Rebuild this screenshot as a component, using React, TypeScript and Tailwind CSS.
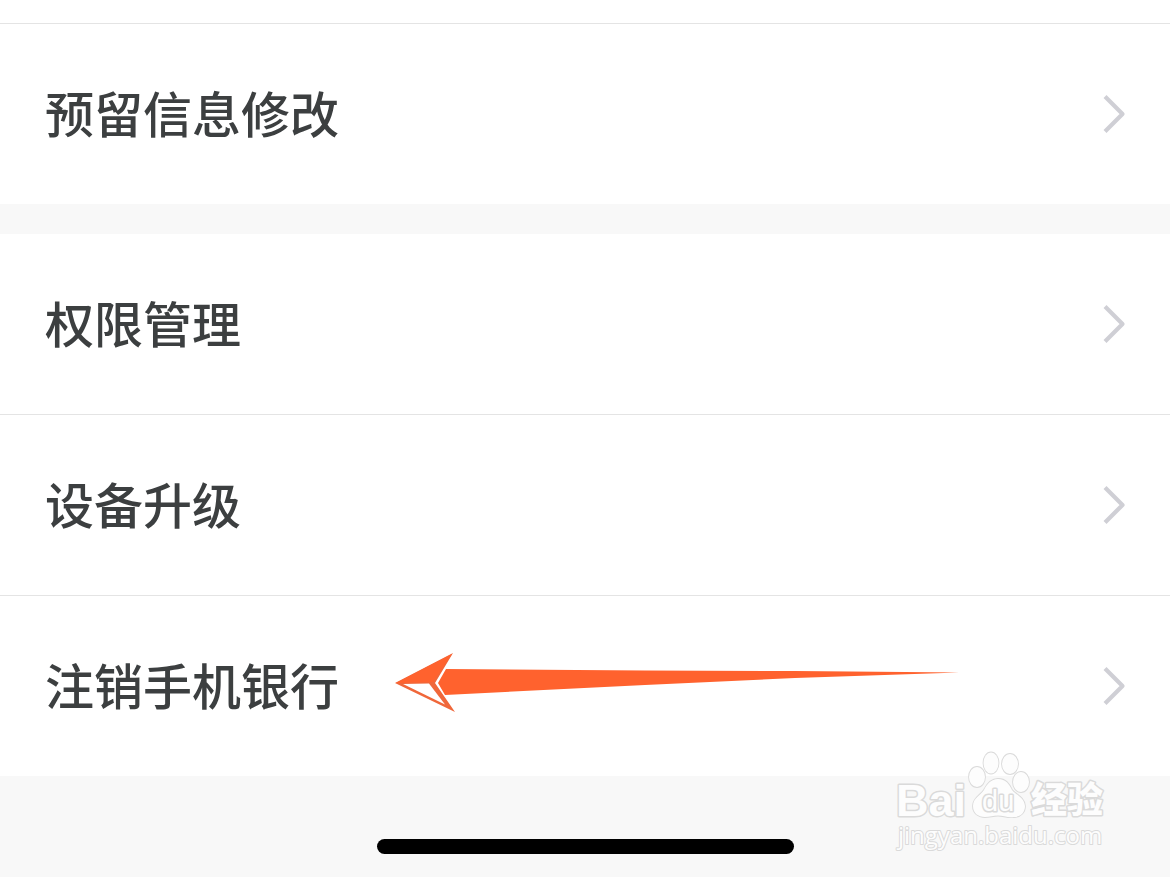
import React from 'react';

interface MenuRowProps {
  label: string;
  children?: React.ReactNode;
}

const ChevronIcon: React.FC = () => (
  <svg className="shrink-0" width="24" height="40" viewBox="0 0 24 40" fill="none" aria-hidden="true">
    <path d="M4.5 4 L20.5 20 L4.5 36" stroke="#cfcfd5" strokeWidth="4.2" strokeLinecap="square" strokeLinejoin="round" />
  </svg>
);

const ArrowMark: React.FC = () => (
  <svg className="mb-1.5 ml-14 shrink-0" width="570" height="64" viewBox="0 0 570 64" aria-hidden="true">
    <path d="M0 32 L58 2 L40 32 L60 61 Z" fill="#f0673a" />
    <path d="M1 32 L57 3 L38 31 Z" fill="#ff622e" />
    <path d="M8 33 L34 32.5 L50 53.5 Z" fill="#fff" />
    <path d="M51 18 L250 19.5 L400 20 L564 21.5 L400 27 L250 34 L50 44 L43 32 Z" fill="#ff622e" />
  </svg>
);

const MenuRow: React.FC<MenuRowProps> = ({ label, children }) => (
  <button type="button" className="flex w-full items-center bg-white py-[54px] pl-[45px] pr-11 text-left">
    <span className="whitespace-nowrap pb-1 text-[49px]/[68px] font-medium text-[#3c3f40]">{label}</span>
    {children}
    <span className="flex-1" />
    <ChevronIcon />
  </button>
);

const Watermark: React.FC = () => (
  <svg
    className="pointer-events-none absolute bottom-3 right-[50px]"
    width="240"
    height="125"
    viewBox="0 0 240 125"
    role="img"
    aria-label="Baidu 经验"
  >
    <g
      fill="#fdfdfd"
      stroke="#dadada"
      strokeWidth="3"
      strokeLinejoin="round"
      paintOrder="stroke"
      fontFamily='"Open Sans", "Noto Sans CJK SC", sans-serif'
    >
      <text x="16" y="76" fontSize="45" fontWeight="700" fontFamily='"Liberation Sans", sans-serif'>Bai</text>
      <ellipse cx="97" cy="37" rx="8" ry="10" strokeWidth="1.8" />
      <ellipse cx="111" cy="23" rx="7.5" ry="10.5" strokeWidth="1.8" />
      <ellipse cx="130" cy="24" rx="8" ry="10" strokeWidth="1.8" />
      <ellipse cx="141" cy="42" rx="8" ry="10" strokeWidth="1.8" />
      <path
        d="M118 39 C111 39 107 44 104 50 C101 55 93 58 93 66 C93 73 98 77 105 77 C110 77 113 75.5 118 75.5 C123 75.5 128 78 134 77 C141 77 145 72 145 66 C144 57 136 55 132 50 C129 44 126 39 118 39 Z"
        strokeWidth="1.8"
      />
      <text x="102" y="71" fontSize="29" fontFamily='"Liberation Sans", sans-serif'>du</text>
      <text x="151" y="73" fontSize="36" fontWeight="900">经验</text>
      <text x="18" y="104" fontSize="24" strokeWidth="2">jingyan.baidu.com</text>
    </g>
  </svg>
);

const App: React.FC = () => {
  return (
    <div className="relative flex min-h-screen flex-col bg-[#f8f8f8] font-['Noto_Sans_CJK_SC',sans-serif]">
      <div className="h-6 border-b border-[#e4e4e4] bg-white" />
      <MenuRow label="预留信息修改" />
      <div className="mt-[30px] divide-y divide-[#e4e4e4]">
        <MenuRow label="权限管理" />
        <MenuRow label="设备升级" />
        <MenuRow label="注销手机银行">
          <ArrowMark />
        </MenuRow>
      </div>
      <div className="flex flex-1 items-end justify-center pb-[23px]">
        <div className="h-[15px] w-[417px] rounded-full bg-black" />
      </div>
      <Watermark />
    </div>
  );
};

export default App;
